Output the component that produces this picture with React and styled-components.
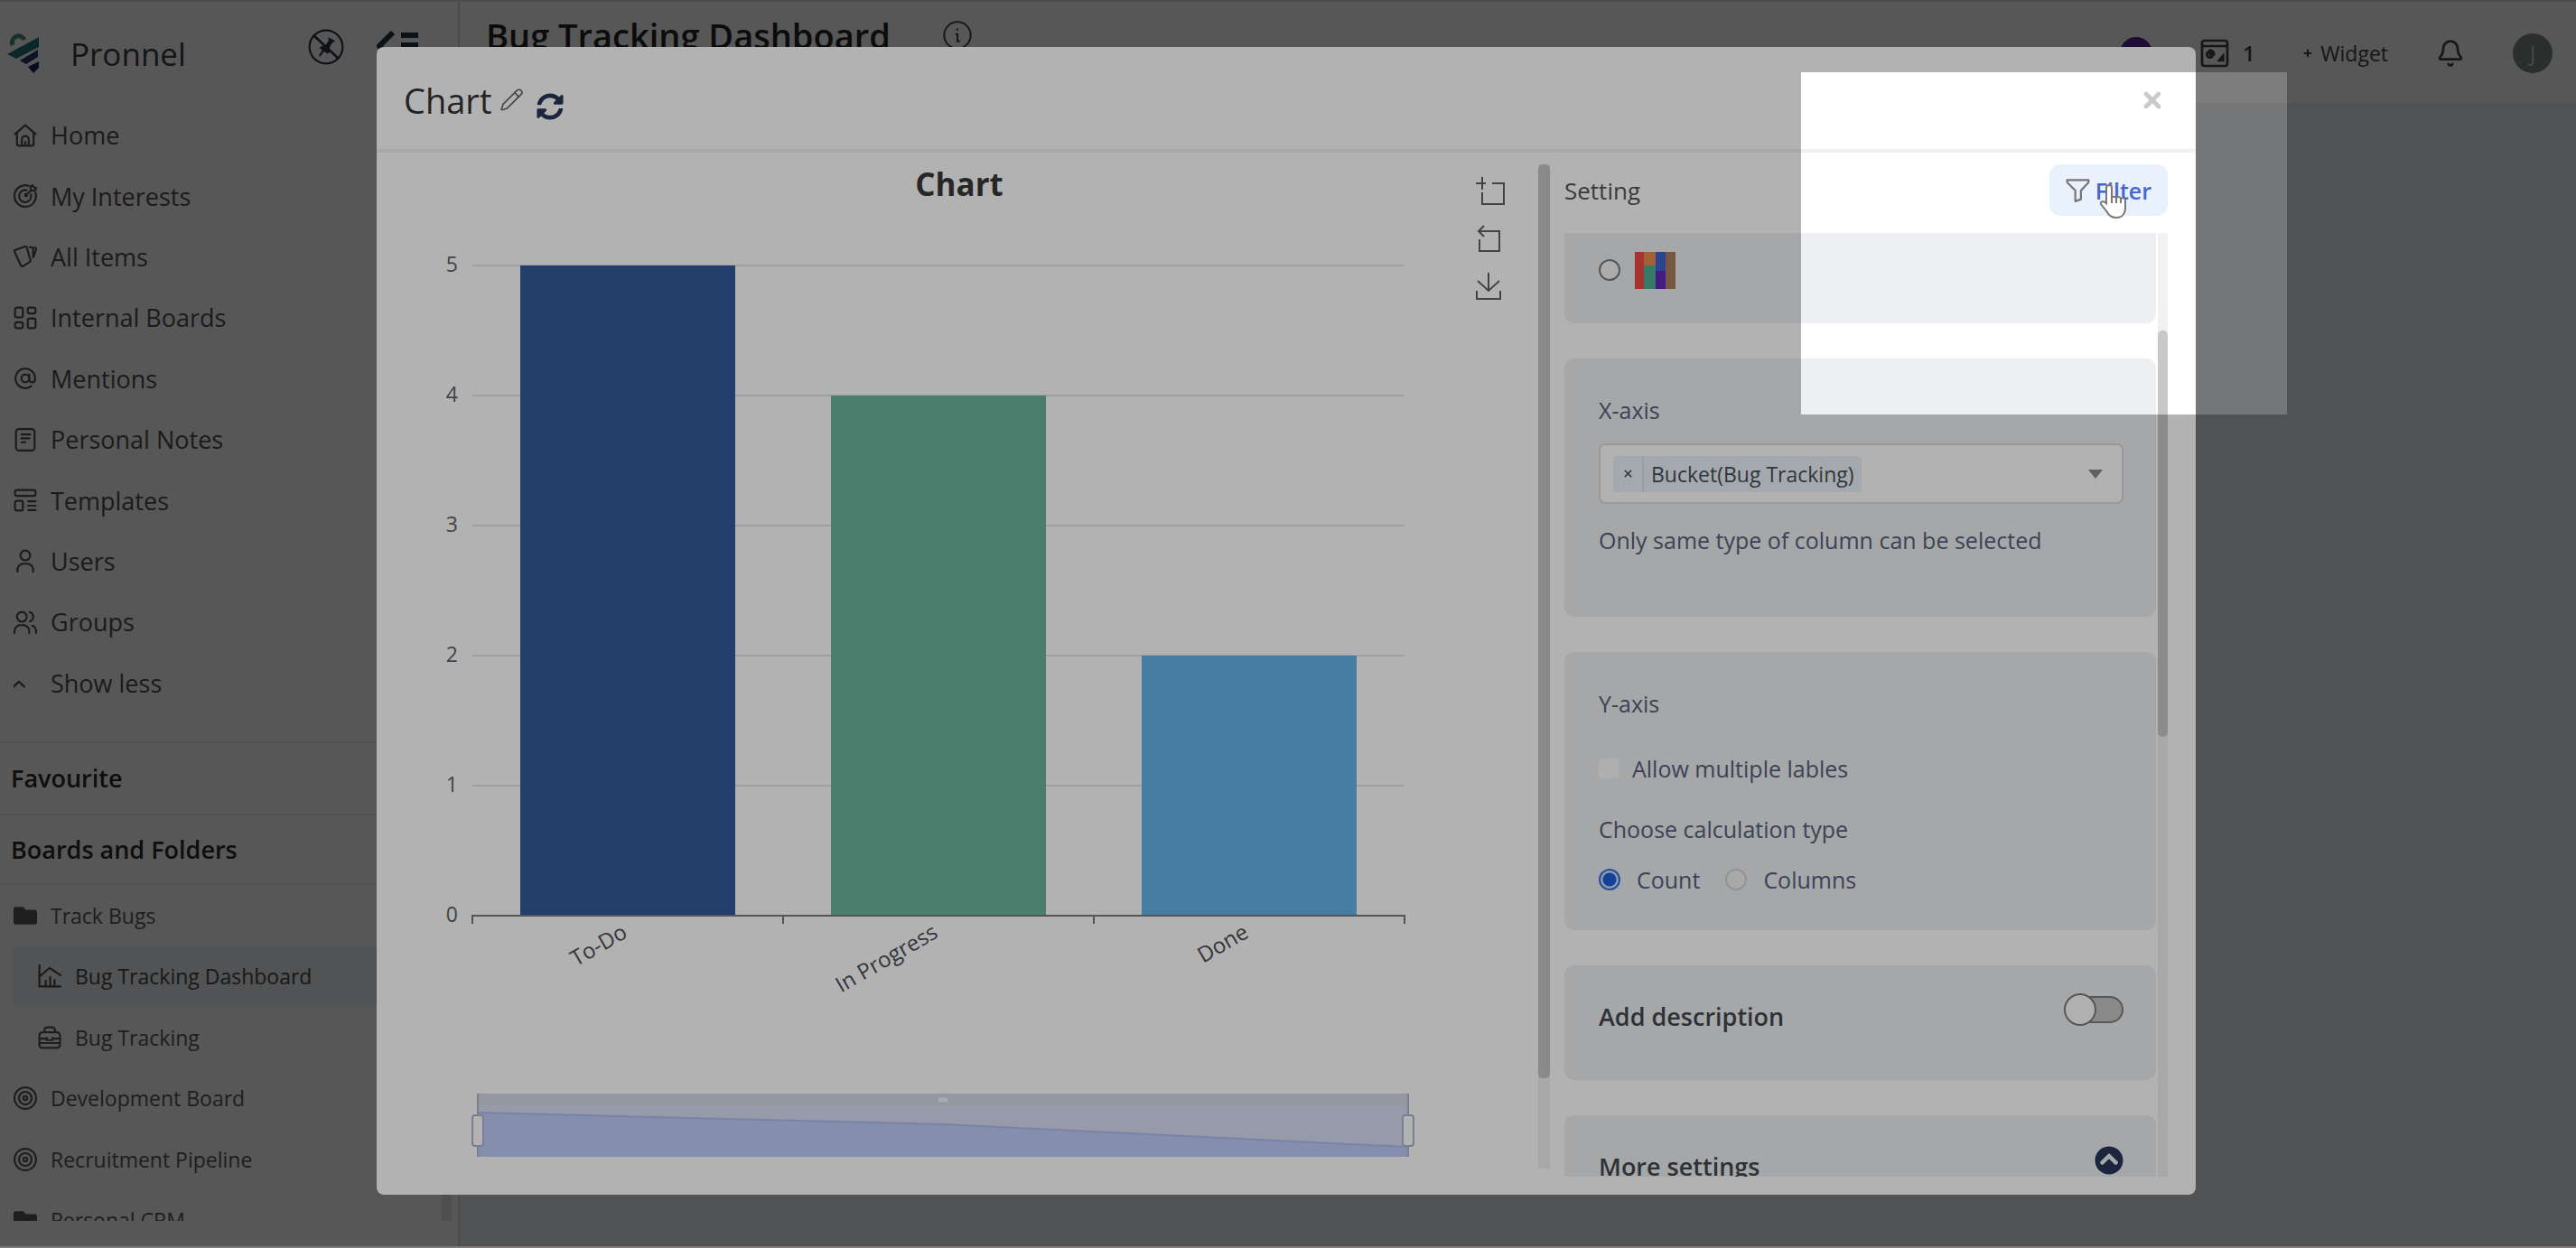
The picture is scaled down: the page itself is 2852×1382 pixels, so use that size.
import React, { useState } from 'react';
import styled, { createGlobalStyle, css } from 'styled-components';
import { AtSign, Bell, Pencil, Plus, X } from 'lucide-react';
import { FaChevronCircleUp, FaFolder, FaSyncAlt } from 'react-icons/fa';

const GlobalStyle = createGlobalStyle`
  * {
    box-sizing: border-box;
  }

  body {
    margin: 0;
    overflow: hidden;
    font-family: 'Open Sans', 'Noto Sans', sans-serif;
    background: #b3abad;
  }

  button {
    font: inherit;
    color: inherit;
    background: none;
    border: none;
    padding: 0;
    display: flex;
    align-items: center;
    cursor: pointer;
  }
`;

/* ---------- shell ---------- */

const Shell = styled.div`
  position: relative;
  display: flex;
  height: 100vh;
  overflow: hidden;
`;

const Sidebar = styled.aside`
  display: flex;
  flex-direction: column;
  flex: 0 0 509px;
  min-height: 0;
  padding-bottom: 30px;
  background: #fff;
  border-top: 2px solid #dedede;
  border-right: 2px solid #dadada;
`;

const BrandRow = styled.div`
  display: flex;
  align-items: center;
  flex: 0 0 114px;
  padding: 0 44px 0 8px;
`;

const BrandName = styled.span`
  flex: 1;
  margin-left: 34px;
  font-size: 35px;
  color: #3c4048;
`;

const BrandActions = styled.div`
  display: flex;
  align-items: center;
  gap: 36px;
  height: 84px;
  align-self: flex-start;
  padding-top: 16px;
  color: #2a3544;
`;

const Nav = styled.nav`
  flex: none;
  display: grid;
  grid-auto-rows: 1fr;
  height: 674px;
  margin-bottom: 31px;
`;

const NavItem = styled.a`
  display: flex;
  align-items: center;
  gap: 15px;
  padding-left: 15px;
  font-size: ${(p) => (p.$small ? 23 : 27)}px;
  color: ${(p) => (p.$small ? '#5a5a5a' : '#525252')};
  text-decoration: none;
  white-space: nowrap;

  svg {
    flex: none;
  }

  ${(p) =>
    p.$nested &&
    css`
      margin-left: 14px;
      padding-left: 28px;
    `}

  ${(p) =>
    p.$active &&
    css`
      background: #eff2f6;
      color: #4a4a4a;
    `}
`;

const SectionTitle = styled.h2`
  flex: none;
  display: flex;
  align-items: center;
  height: ${(p) => p.$height}px;
  margin: 0;
  padding-left: 12px;
  border-top: 2px solid #ececec;
  font-size: 27px;
  line-height: 36px;
  font-weight: 600;
  color: #2c2c2c;
`;

const BoardArea = styled.div`
  flex: 1;
  display: flex;
  justify-content: space-between;
  min-height: 0;
  overflow: hidden;
  padding-right: 7px;
  border-top: 2px solid #ececec;
`;

const BoardList = styled.div`
  flex: 1;
  display: grid;
  grid-auto-rows: 1fr;
  height: 405px;
  margin-right: 8px;
`;

const BoardScroll = styled.div`
  width: 11px;
  background: #e6e6e6;
`;

const Main = styled.main`
  flex: 1;
  background: #eff1f3;
  border-top: 2px solid #dedede;
`;

const Header = styled.header`
  display: flex;
  align-items: flex-start;
  height: 112px;
  padding: 11px 26px 0 29px;
  background: #fff;
`;

const PageTitle = styled.h1`
  margin: 0 58px 0 0;
  font-size: 38px;
  line-height: 52px;
  font-weight: 600;
  color: #262626;
`;

const InfoButton = styled.button`
  height: 52px;
  margin-right: auto;
  color: #444;
`;

const HeaderTools = styled.div`
  display: flex;
  align-items: center;
  gap: 53px;
  height: 92px;
  font-size: 23px;
  color: #444;
`;

const Avatar = styled.span`
  display: flex;
  align-items: center;
  justify-content: center;
  width: ${(p) => p.$size}px;
  height: ${(p) => p.$size}px;
  border-radius: 50%;
  background: ${(p) => p.$color};
  color: #d3d8d6;
`;

const ToolButton = styled.button`
  gap: ${(p) => p.$gap}px;
  font-weight: ${(p) => (p.$strong ? 600 : 400)};
`;

/* ---------- modal ---------- */

const Backdrop = styled.div`
  position: absolute;
  inset: 0 0 2px;
  display: flex;
  padding: 52px 421px 57px 417px;
  background: rgba(0, 0, 0, 0.51);
`;

const BottomEdge = styled.div`
  position: absolute;
  inset: auto 0 0;
  height: 2px;
  background: #b3abad;
`;

const Modal = styled.section`
  flex: 1;
  display: flex;
  flex-direction: column;
  min-width: 0;
  overflow: hidden;
  border-radius: 8px;
  background: #fff;
`;

const ModalHeader = styled.div`
  display: flex;
  align-items: center;
  flex: 0 0 117px;
  padding: 4px 34px 0 30px;
  border-bottom: 4px solid #f1f1f1;
`;

const ModalTitle = styled.h2`
  margin: 0 9px 0 0;
  font-size: 38px;
  font-weight: 400;
  color: #333;
`;

const IconButton = styled.button`
  color: ${(p) => p.$color};
  margin-right: ${(p) => p.$gap || 0}px;
`;

const RefreshButton = styled(IconButton)`
  padding-top: 14px;
`;

const CloseButton = styled.button`
  margin-left: auto;
  color: #c9c9c9;
`;

const ModalBody = styled.div`
  flex: 1;
  display: flex;
  min-height: 0;
  padding: 13px 31px 20px 0;
`;

const ChartPane = styled.div`
  position: relative;
  flex: 1;
  min-width: 0;
  overflow: hidden;
`;

const ChartTitle = styled.h3`
  margin: 0;
  padding-left: 4px;
  font-size: 35px;
  line-height: 44px;
  text-align: center;
  color: #383838;
`;

const Plot = styled.svg`
  display: block;
  width: 100%;
  font-size: 23px;
`;

const Toolbox = styled.div`
  position: absolute;
  top: 13px;
  right: 36px;
  display: flex;
  flex-direction: column;
  gap: 20px;
  color: #606060;
`;

const Scrollbar = styled.div`
  flex: none;
  width: ${(p) => p.$width}px;
  padding-top: ${(p) => p.$top || 0}px;
  margin-bottom: ${(p) => p.$bottom || 0}px;
  background: #f1f1f1;
`;

const Thumb = styled.div`
  height: ${(p) => p.$length}%;
  border-radius: 5px;
  background: ${(p) => p.$color};
`;

const SettingPane = styled.div`
  flex: 0 0 684px;
  display: flex;
  flex-direction: column;
  min-height: 0;
  padding-left: 16px;
`;

const SettingHeader = styled.div`
  flex: none;
  display: flex;
  align-items: center;
  justify-content: space-between;
  margin-bottom: 19px;
  font-size: 26px;
  color: #555;
`;

const FilterButton = styled.button`
  gap: 6px;
  height: 57px;
  padding: 0 18px;
  border-radius: 12px;
  background: #e9f1fd;
  font-size: 25px;
  font-weight: 600;
  color: #4666cf;

  svg {
    color: #777;
  }
`;

const SettingScroll = styled.div`
  flex: 1;
  display: flex;
  gap: 2px;
  min-height: 0;
  overflow: hidden;
`;

const CardList = styled.div`
  flex: 1;
  display: flex;
  flex-direction: column;
  gap: 39px;
`;

const Card = styled.div`
  flex: none;
  padding: 39px 36px 38px 38px;
  border-radius: 11px;
  background: #edeff2;
  font-size: 25px;
  line-height: 36px;
  color: #56617a;
`;

const PaletteCard = styled(Card)`
  display: flex;
  align-items: center;
  gap: 16px;
  height: 100px;
  padding-top: 0;
  padding-bottom: 18px;
  border-radius: 0 0 11px 11px;
`;

const AxisCard = styled(Card)`
  padding-bottom: 67px;
`;

const TitleCard = styled(Card)`
  display: flex;
  align-items: flex-start;
  justify-content: space-between;
  padding-top: 34px;
  padding-bottom: 52px;
`;

const CardTitle = styled.h4`
  margin: 5px 0 0;
  font-size: 27px;
  font-weight: 600;
  color: #43484f;
`;

const SelectBox = styled.div`
  position: relative;
  display: flex;
  align-items: center;
  height: 67px;
  margin: 19px 0 22px;
  padding: 0 14px;
  border: 2px solid #dcdcdc;
  border-radius: 7px;
  background: #fff;

  > svg {
    position: absolute;
    right: 21px;
    pointer-events: none;
  }
`;

const Chip = styled.span`
  display: flex;
  align-items: center;
  height: 40px;
  border-radius: 4px;
  background: #ebf2f9;
  font-size: 23px;
  color: #4a4f57;

  button {
    justify-content: center;
    width: 34px;
    height: 40px;
    border-right: 2px solid #d3e2ef;
  }

  span {
    padding: 0 8px;
  }
`;

const ColumnSelect = styled.select`
  flex: 1;
  height: 60px;
  border: none;
  background: transparent;
  appearance: none;
`;

const Choice = styled.label`
  display: flex;
  align-items: center;
  gap: ${(p) => p.$gap}px;
`;

const CheckRow = styled.div`
  display: flex;
  margin: 36px 0 31px;
`;

const RadioRow = styled.div`
  display: flex;
  gap: 28px;
  margin-top: 20px;
`;

const Radio = styled.input.attrs({ type: 'radio' })`
  appearance: none;
  flex: none;
  width: 24px;
  height: 24px;
  margin: 0;
  border: 2px solid ${(p) => p.$ring};
  border-radius: 50%;
  background: ${(p) => p.$fill};

  &:checked {
    border-color: #2f6fe0;
    background: radial-gradient(circle, #1f5fdc 7px, #cfe0fa 8px);
  }
`;

const Checkbox = styled.input.attrs({ type: 'checkbox' })`
  appearance: none;
  width: 22px;
  height: 22px;
  margin: 0;
  border-radius: 4px;
  background: #fbfbfb;

  &:checked {
    background: #1f5fdc;
  }
`;

const Toggle = styled.input.attrs({ type: 'checkbox' })`
  appearance: none;
  display: flex;
  align-items: center;
  width: 66px;
  height: 30px;
  margin: 0;
  border: 2px solid #7d7d7d;
  border-radius: 15px;
  background: #c4c4c4;

  &::before {
    content: '';
    width: 32px;
    height: 32px;
    margin-left: -2px;
    border: 2px solid #7d7d7d;
    border-radius: 50%;
    background: #fdfdfd;
  }

  &:checked {
    justify-content: flex-end;
  }
`;

/* ---------- tour ---------- */

const Spotlight = styled.div`
  position: absolute;
  top: 80px;
  right: 320px;
  width: 538px;
  height: 379px;
  box-shadow: 0 0 0 4000px rgba(0, 0, 0, 0.3);
  pointer-events: none;
`;

const Pointer = styled.svg`
  position: absolute;
  top: 203px;
  right: 497px;
  pointer-events: none;
`;

/* ---------- icons ---------- */

function Icon({ size = 26, width = 2, children }) {
  return (
    <svg
      width={size}
      height={size}
      viewBox="0 0 24 24"
      fill="none"
      stroke="currentColor"
      strokeWidth={width}
      strokeLinecap="round"
      strokeLinejoin="round"
      aria-hidden="true"
    >
      {children}
    </svg>
  );
}

const HomeIcon = () => (
  <Icon>
    <path d="M1.5 10.5 12 1.5l10.5 9M3.5 9v11.5a2 2 0 0 0 2 2h13a2 2 0 0 0 2-2V9" />
    <path d="M8.5 22v-6a3.500 3.500 0 0 1 7 0v6M12 18.500v3" />
  </Icon>
);

const GoalIcon = () => (
  <Icon>
    <path d="M15.500 1.700a11 11 0 1 0 6.800 6.800" />
    <path d="M13.500 6.200a6.200 6.200 0 1 0 4.300 4.300" />
    <path d="M12 12l6-6M12 12v-2M12 12h2M17.500 2.500v4h4l2-2.500-3-1-1-2z" />
  </Icon>
);

const CardsIcon = () => (
  <Icon>
    <path d="M1.500 5.500 11.500 1.800a1.500 1.500 0 0 1 2 1l3.800 13a1.500 1.500 0 0 1-.8 1.800L9.500 22a1.500 1.500 0 0 1-2-.8L1 7.200a1.500 1.500 0 0 1 .5-1.700z" />
    <path d="M16.500 2.500h2a1.500 1.500 0 0 1 1.500 1.500v9M22 3c1.300.6 1.300 1.500.9 2.500L20.500 12" />
  </Icon>
);

const BoardsIcon = () => (
  <Icon>
    <rect x="1.500" y="1.500" width="8" height="10" rx="2" />
    <rect x="14.500" y="1.500" width="8" height="6" rx="2" />
    <rect x="1.500" y="16.500" width="8" height="6" rx="2" />
    <rect x="14.500" y="12.500" width="8" height="10" rx="2" />
  </Icon>
);

const NotesIcon = () => (
  <Icon>
    <rect x="2.500" y="1" width="19" height="22" rx="3" />
    <path d="M8 6.500h9M8 10.500h8M8 14.500h4" />
  </Icon>
);

const TemplatesIcon = () => (
  <Icon>
    <rect x="1.500" y="1.500" width="21" height="6" rx="2" />
    <rect x="1.500" y="12.500" width="8" height="10" rx="2" />
    <path d="M15 13h7.500M15 17.500h7.500M15 22h7.500" />
  </Icon>
);

const UserIcon = () => (
  <Icon>
    <circle cx="12" cy="6.500" r="5" />
    <path d="M4 23v-2a6 6 0 0 1 6-6h4a6 6 0 0 1 6 6v2" />
  </Icon>
);

const GroupIcon = () => (
  <Icon>
    <circle cx="8.500" cy="6.500" r="5" />
    <path d="M1 23v-2a6 6 0 0 1 6-6h3a6 6 0 0 1 6 6v2M16.500 1.700a5 5 0 0 1 0 9.600M19 15.500a6 6 0 0 1 4 5.500v2" />
  </Icon>
);

const LessIcon = () => (
  <Icon>
    <path d="M0 16l5.500-5 5.500 5" />
  </Icon>
);

const DashboardIcon = () => (
  <Icon>
    <path d="M1.500 1v21.500H23M2 12l10-8.500L23 11" />
    <path d="M8 21v-4M12.500 21v-8M17 21v-5" />
  </Icon>
);

const CaseIcon = () => (
  <Icon>
    <rect x="1.500" y="6.500" width="21" height="16" rx="3" />
    <path d="M6.500 6V4.500a3 3 0 0 1 3-3h5a3 3 0 0 1 3 3V6M2 13h6M16 13h6M9 14.500h6M9 14.500v-2.500M15 14.500v-2.500M2 17.500h20" />
  </Icon>
);

const TargetIcon = () => (
  <Icon>
    <circle cx="12" cy="12" r="11" />
    <circle cx="12" cy="12" r="6.500" />
    <circle cx="12" cy="12" r="2" />
  </Icon>
);

const FilterIcon = () => (
  <Icon size={27}>
    <path d="M1.500 2h21v2.500l-7.500 8V21l-5.500 2V12.500L1.500 4.500z" />
  </Icon>
);

const InfoIcon = () => (
  <Icon size={32} width={1.5}>
    <circle cx="12" cy="12" r="11" />
    <path d="M12 7v.5M11 11h1v6h1.500" />
  </Icon>
);

const NoPinIcon = () => (
  <Icon size={40} width={1.3}>
    <circle cx="12" cy="12" r="11" />
    <path d="M4 4.500 20 19.500" strokeWidth="1.6" />
    <path
      d="M13.500 5.500l4.500 2.500-1 1-1 .3-1.700 3.200.2 3-1.500 1-5.500-3.700 1.500-1.200 2.500-.6 2.200-3z"
      fill="currentColor"
      stroke="none"
    />
    <path d="M10.500 14l-2.500 3.500" />
  </Icon>
);

const FoldIcon = () => (
  <svg width="46" height="36" viewBox="0 0 46 36" stroke="currentColor" strokeWidth="6" fill="none" aria-hidden="true">
    <path d="M18 2 3 17l15 15M27 5h19M27 16h19M27 28h19" />
  </svg>
);

const WidgetIcon = () => (
  <Icon size={32}>
    <rect x="1.500" y="1.500" width="21" height="21" rx="2" />
    <path d="M1.500 6h21" />
    <circle cx="8" cy="13" r="2.500" />
    <path d="M8 13V9.500A3.500 3.500 0 0 1 11.500 13z" fill="currentColor" />
    <path d="M14.500 18.500h5v-6z" fill="currentColor" strokeWidth="1" />
  </Icon>
);

const BrandLogo = () => (
  <svg width="36" height="46" viewBox="0 0 36 46" aria-hidden="true">
    <path d="M6 14a7 7 0 0 1 13-6" fill="none" stroke="#4f9270" strokeWidth="5" />
    <path d="M35 5v11L10 29 0 24z" fill="#22737f" />
    <path d="M34 19v8L21 35l-7-4z" fill="#27376f" />
    <path d="M35 32v7l-6 6-6-7z" fill="#1b2460" />
  </svg>
);

/* ---------- data ---------- */

const NAV = [
  ['Home', <HomeIcon />],
  ['My Interests', <GoalIcon />],
  ['All Items', <CardsIcon />],
  ['Internal Boards', <BoardsIcon />],
  ['Mentions', <AtSign size={26} />],
  ['Personal Notes', <NotesIcon />],
  ['Templates', <TemplatesIcon />],
  ['Users', <UserIcon />],
  ['Groups', <GroupIcon />],
  ['Show less', <LessIcon />],
];

const BOARDS = [
  { name: 'Track Bugs', icon: <FaFolder size={26} /> },
  { name: 'Bug Tracking Dashboard', icon: <DashboardIcon />, nested: true, active: true },
  { name: 'Bug Tracking', icon: <CaseIcon />, nested: true },
  { name: 'Development Board', icon: <TargetIcon /> },
  { name: 'Recruitment Pipeline', icon: <TargetIcon /> },
  { name: 'Personal CRM', icon: <FaFolder size={26} /> },
];

const BUCKETS = [
  { label: 'To-Do', value: 5, color: '#34599a' },
  { label: 'In Progress', value: 4, color: '#6ab49a' },
  { label: 'Done', value: 2, color: '#68b3ea' },
];

const LEFT = 106;
const BASE = 788;
const STEP = 144;
const BAND = 344;
const BAR = 238;

function BarChart() {
  const right = LEFT + BAND * BUCKETS.length;

  return (
    <Plot viewBox="0 0 1286 1068" role="img" aria-label="Items per bucket">
      {[0, 1, 2, 3, 4, 5].map((n) => (
        <g key={n}>
          {n > 0 && (
            <line x1={LEFT} x2={right} y1={BASE - n * STEP} y2={BASE - n * STEP} stroke="#e2e5ea" strokeWidth="2" />
          )}
          <text x="90" y={BASE - n * STEP + 7} textAnchor="end" fill="#5f6166">
            {n}
          </text>
        </g>
      ))}

      {BUCKETS.map((b, i) => {
        const mid = LEFT + BAND * i + BAND / 2;
        return (
          <g key={b.label}>
            <rect x={mid - BAR / 2} y={BASE - b.value * STEP} width={BAR} height={b.value * STEP} fill={b.color} />
            <text
              textAnchor="end"
              fontSize="24"
              fill="#4c4e53"
              transform={`translate(${mid + 1} 811) rotate(-30)`}
            >
              {b.label}
            </text>
          </g>
        );
      })}

      <path
        d={`M${LEFT} ${BASE + 9}v-9H${right}v9M${LEFT + BAND} ${BASE}v9M${LEFT + BAND * 2} ${BASE}v9`}
        fill="none"
        stroke="#777a82"
        strokeWidth="2"
      />

      {/* range slider under the plot */}
      <rect x="112" y="985" width="1030" height="70" fill="#d9dff2" />
      <rect x="112" y="985" width="1030" height="13" fill="#d6dae6" />
      <path d="M112 1006 627 1019 1142 1044V1055H112z" fill="#bfccf6" />
      <path d="M112 1006 627 1019 1142 1044" fill="none" stroke="#adbcee" strokeWidth="2" />
      <path d="M112 985v70M1142 985v70" stroke="#acb8d1" strokeWidth="2" />
      <path d="M622 992h10" stroke="#f2f5fb" strokeWidth="5" />
      {[112, 1142].map((x) => (
        <rect key={x} x={x - 6} y="1009" width="12" height="34" rx="3" fill="#fff" stroke="#acb8d1" strokeWidth="2" />
      ))}
    </Plot>
  );
}

function ChartTools() {
  return (
    <Toolbox>
      <button aria-label="Zoom">
        <svg width="34" height="34" viewBox="0 0 34 34" fill="none" stroke="currentColor" strokeWidth="2">
          <path d="M8 1v14M1 8h11M19 8h13v23H8V18" />
        </svg>
      </button>
      <button aria-label="Reset">
        <svg width="34" height="32" viewBox="0 0 34 32" fill="none" stroke="currentColor" strokeWidth="2">
          <path d="M10 1 4 7l6 6M4 7h23v22H5V16" />
        </svg>
      </button>
      <button aria-label="Save">
        <svg width="34" height="32" viewBox="0 0 34 32" fill="none" stroke="currentColor" strokeWidth="2">
          <path d="M15 1v20M3 10l12 11 12-11M2 21v9h26v-9" />
        </svg>
      </button>
    </Toolbox>
  );
}

function PaletteSwatch() {
  return (
    <svg width="45" height="41" viewBox="0 0 45 41" aria-hidden="true">
      <rect width="11" height="41" fill="#ee4a45" />
      <rect x="10" width="13" height="15" fill="#ea8a48" />
      <rect x="10" y="15" width="13" height="26" fill="#4fae93" />
      <rect x="23" width="11" height="21" fill="#3d62d0" />
      <rect x="23" y="21" width="11" height="20" fill="#6428bb" />
      <rect x="34" width="11" height="41" fill="#a67e5b" />
    </svg>
  );
}

function Settings() {
  const [calc, setCalc] = useState('count');

  return (
    <SettingPane>
      <SettingHeader>
        <span>Setting</span>
        <FilterButton>
          <FilterIcon />
          Filter
        </FilterButton>
      </SettingHeader>

      <SettingScroll>
        <CardList>
          <PaletteCard>
            <Radio name="palette" aria-label="Multicolour palette" $ring="#7a7a7a" $fill="#f6f7f8" />
            <PaletteSwatch />
          </PaletteCard>

          <AxisCard>
            <label htmlFor="x-axis">X-axis</label>
            <SelectBox>
              <Chip>
                <button aria-label="Remove column">
                  <X size={13} strokeWidth={3} />
                </button>
                <span>Bucket(Bug Tracking)</span>
              </Chip>
              <ColumnSelect id="x-axis" />
              <svg width="16" height="10" viewBox="0 0 16 10" fill="#8a8a8a">
                <path d="M0 0h16L8 10z" />
              </svg>
            </SelectBox>
            <div>Only same type of column can be selected</div>
          </AxisCard>

          <Card>
            <div>Y-axis</div>
            <CheckRow>
              <Choice $gap={15}>
                <Checkbox />
                Allow multiple lables
              </Choice>
            </CheckRow>
            <div>Choose calculation type</div>
            <RadioRow>
              <Choice $gap={18}>
                <Radio
                  name="calc"
                  checked={calc === 'count'}
                  onChange={() => setCalc('count')}
                  $ring="#d2d2d2"
                  $fill="#f1f2f3"
                />
                Count
              </Choice>
              <Choice $gap={18}>
                <Radio
                  name="calc"
                  checked={calc === 'columns'}
                  onChange={() => setCalc('columns')}
                  $ring="#d2d2d2"
                  $fill="#f1f2f3"
                />
                Columns
              </Choice>
            </RadioRow>
          </Card>

          <TitleCard>
            <CardTitle id="add-description">Add description</CardTitle>
            <Toggle aria-labelledby="add-description" />
          </TitleCard>

          <TitleCard>
            <CardTitle>More settings</CardTitle>
            <IconButton $color="#27375a" aria-label="Collapse more settings">
              <FaChevronCircleUp size={32} />
            </IconButton>
          </TitleCard>
        </CardList>
        <Scrollbar $width={11} $top={108}>
          <Thumb $length={48} $color="#c8c8c8" />
        </Scrollbar>
      </SettingScroll>
    </SettingPane>
  );
}

export default function App() {
  return (
    <Shell>
      <GlobalStyle />

      <Sidebar>
        <BrandRow>
          <BrandLogo />
          <BrandName>Pronnel</BrandName>
          <BrandActions>
            <NoPinIcon />
            <FoldIcon />
          </BrandActions>
        </BrandRow>
        <Nav>
          {NAV.map(([name, icon]) => (
            <NavItem key={name} href="#">
              {icon}
              {name}
            </NavItem>
          ))}
        </Nav>
        <SectionTitle $height={80}>Favourite</SectionTitle>
        <SectionTitle $height={77}>Boards and Folders</SectionTitle>
        <BoardArea>
          <BoardList>
            {BOARDS.map((b) => (
              <NavItem key={b.name} href="#" $small $nested={b.nested} $active={b.active}>
                {b.icon}
                {b.name}
              </NavItem>
            ))}
          </BoardList>
          <BoardScroll />
        </BoardArea>
      </Sidebar>

      <Main>
        <Header>
          <PageTitle>Bug Tracking Dashboard</PageTitle>
          <InfoButton aria-label="About this dashboard">
            <InfoIcon />
          </InfoButton>
          <HeaderTools>
            <Avatar $size={36} $color="#5f2a9c" />
            <ToolButton $gap={15} $strong>
              <WidgetIcon />1
            </ToolButton>
            <ToolButton $gap={8}>
              <Plus size={12} strokeWidth={4} />
              Widget
            </ToolButton>
            <Bell size={32} />
            <Avatar $size={44} $color="#7d8a86">
              J
            </Avatar>
          </HeaderTools>
        </Header>
      </Main>

      <BottomEdge />
      <Backdrop>
        <Modal role="dialog" aria-label="Chart">
          <ModalHeader>
            <ModalTitle>Chart</ModalTitle>
            <IconButton $color="#666" $gap={14} aria-label="Rename chart">
              <Pencil size={27} strokeWidth={1.5} />
            </IconButton>
            <RefreshButton $color="#27375a" aria-label="Refresh">
              <FaSyncAlt size={30} />
            </RefreshButton>
            <CloseButton aria-label="Close">
              <X size={28} strokeWidth={4} />
            </CloseButton>
          </ModalHeader>

          <ModalBody>
            <ChartPane>
              <ChartTitle>Chart</ChartTitle>
              <BarChart />
              <ChartTools />
            </ChartPane>
            <Scrollbar $width={13} $bottom={9}>
              <Thumb $length={91} $color="#c3c5c6" />
            </Scrollbar>
            <Settings />
          </ModalBody>
        </Modal>
      </Backdrop>

      <Spotlight />
      <Pointer width="32" height="40" viewBox="0 0 32 40" fill="#fff" stroke="#777" strokeWidth="2" aria-hidden="true">
        <path d="M9 22V5a3 3 0 0 1 6 0v11a3 3 0 0 1 5 0 3 3 0 0 1 5 1 3 3 0 0 1 5 2v8c0 7-4 11-10 11-5 0-8-2-10-6L3 23c-1-3 3-4 6-1z" />
        <path d="M15 14v8M20 15v7M25 17v5" />
      </Pointer>
    </Shell>
  );
}
